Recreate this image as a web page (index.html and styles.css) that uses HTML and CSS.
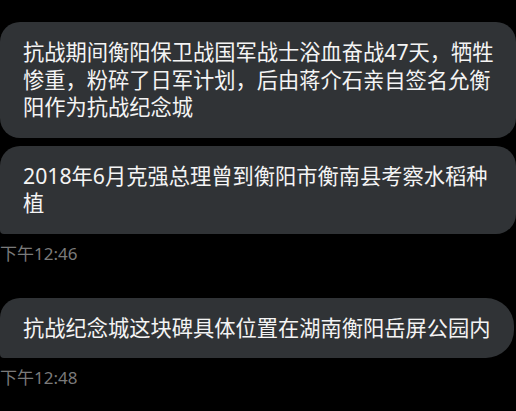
FILE: index.html
```html
<!DOCTYPE html>
<html lang="zh-CN">
<head>
    <meta charset="UTF-8">
    <meta name="viewport" content="width=device-width, initial-scale=1.0">
    <title>聊天记录</title>
    <link rel="stylesheet" href="styles.css">
</head>
<body>

    <div class="chat">
        <!-- first group -->
        <div class="group">
            <div class="bubble">抗战期间衡阳保卫战国军战士浴血奋战47天，牺牲惨重，粉碎了日军计划，后由蒋介石亲自签名允衡阳作为抗战纪念城</div>
            <div class="bubble bubble-last">2018年6月克强总理曾到衡阳市衡南县考察水稻种植</div>
            <div class="time">下午12:46</div>
        </div>

        <!-- second group -->
        <div class="group">
            <div class="bubble bubble-last bubble-single">抗战纪念城这块碑具体位置在湖南衡阳岳屏公园内</div>
            <div class="time">下午12:48</div>
        </div>
    </div>

</body>
</html>
```

FILE: styles.css
```css
html, body {
    margin: 0;
    background-color: #000;
}

body {
    width: 516px;
    height: 411px;
    overflow: hidden;
    font-family: "Noto Sans", "Noto Sans CJK SC", sans-serif;
}

.chat {
    display: flex;
    flex-direction: column;
    gap: 34px;
    padding-top: 22px;
}

.group {
    display: flex;
    flex-direction: column;
    align-items: flex-start;
    gap: 8px;
}

.bubble {
    box-sizing: border-box;
    max-width: 516px;
    padding: 16px 18px 17px 23px;
    background-color: #303336;
    color: #f4f4f4;
    font-size: 21.25px;
    line-height: 27.5px;
    border-radius: 20px;
}

.bubble-last {
    border-bottom-left-radius: 4px;
}

.bubble-single {
    padding-right: 23px;
    border-top-right-radius: 28px;
    border-bottom-right-radius: 28px;
}

.time {
    margin-top: 1px;
    color: #7a7a7a;
    font-size: 17px;
    line-height: 21px;
}
```
